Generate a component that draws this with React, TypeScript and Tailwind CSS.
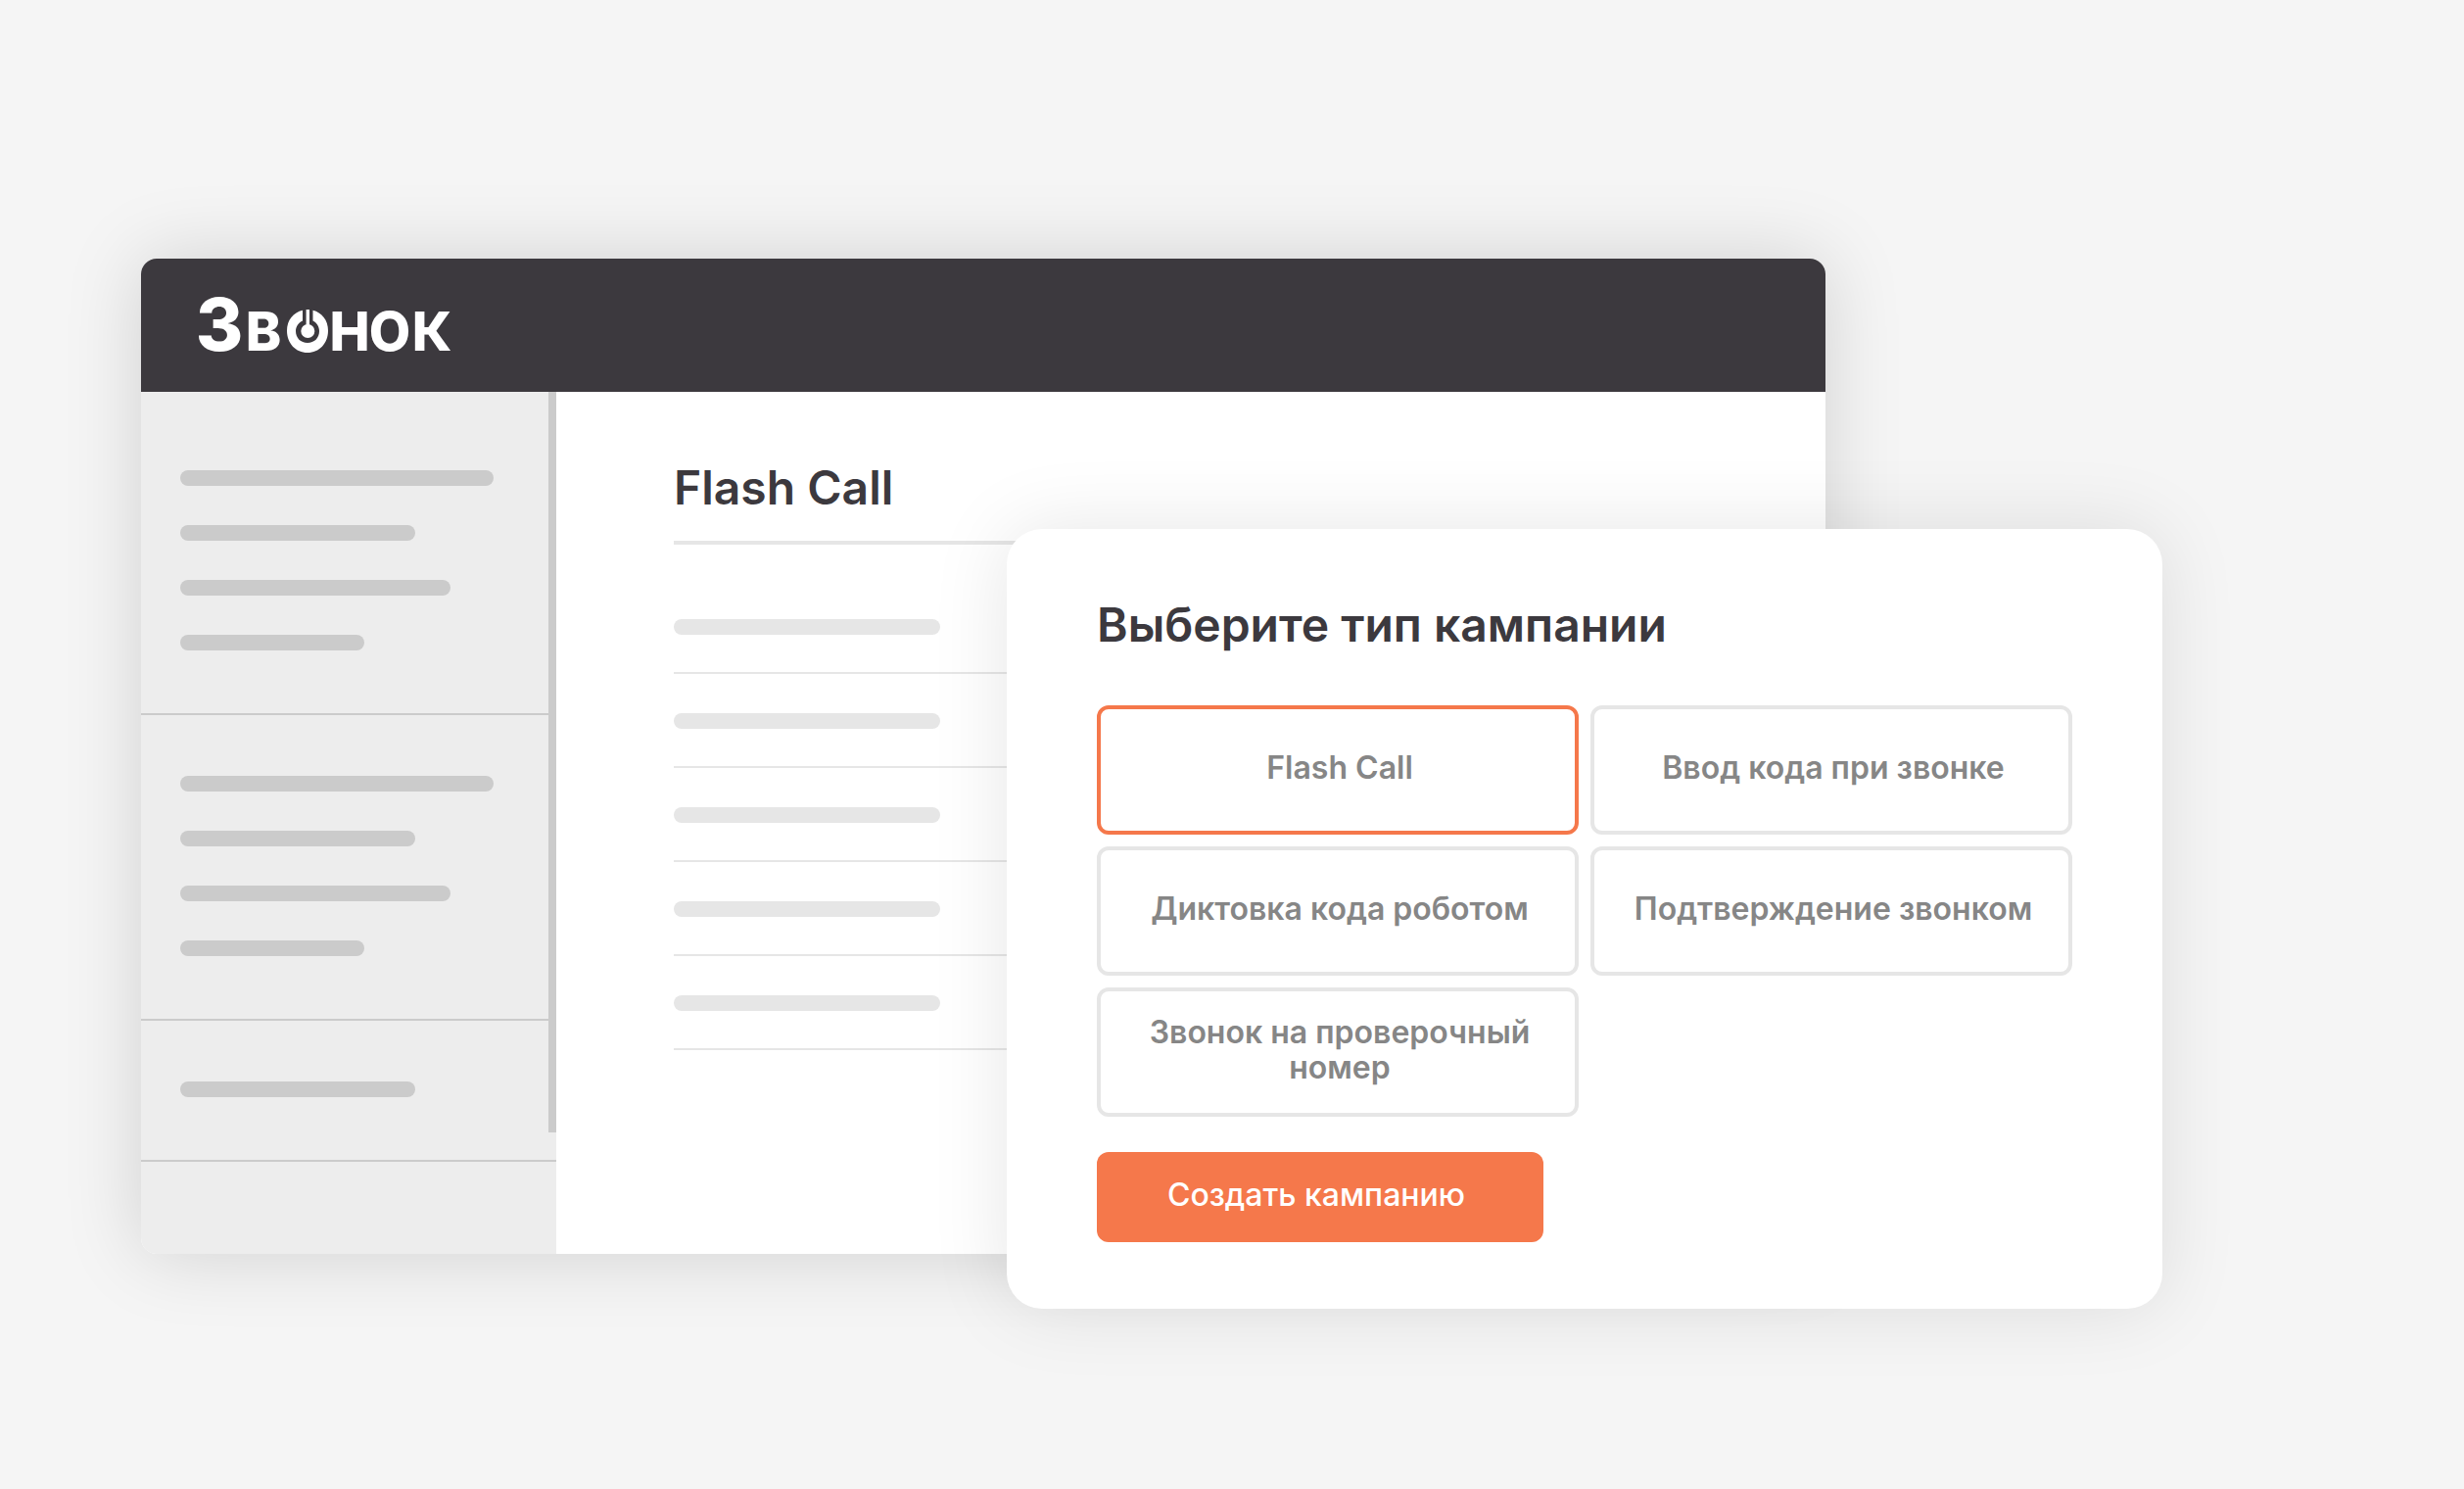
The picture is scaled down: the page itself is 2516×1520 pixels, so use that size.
import { useState } from "react";

const sidebarGroups: string[][] = [
  ["w-80", "w-60", "w-[276px]", "w-[188px]"],
  ["w-80", "w-60", "w-[276px]", "w-[188px]"],
  ["w-60"],
];

const rows = [1, 2, 3, 4, 5];

const campaignTypes = [
  "Flash Call",
  "Ввод кода при звонке",
  "Диктовка кода роботом",
  "Подтверждение звонком",
  "Звонок на проверочный номер",
];

function Logo() {
  return (
    <svg
      role="img"
      aria-label="Звонок"
      width="256"
      height="56"
      viewBox="0 0 256 56"
      fill="#ffffff"
      className="shrink-0 overflow-visible font-['Inter',sans-serif] font-extrabold"
    >
      <g textAnchor="middle">
        <text x="20" y="54" fontSize="74">З</text>
        <text x="65" y="54" fontSize="55">В</text>
        <text x="153" y="54" fontSize="55">Н</text>
        <text x="194" y="54" fontSize="55">О</text>
        <text x="237" y="54" fontSize="55">К</text>
      </g>
      {/* ring with a plugged-in stem */}
      <path
        fillRule="evenodd"
        d="M105 12.8C95.500 15 89 23 89 33.500C89 46.500 98 56 110 56C122 56 131 46.500 131 33.500C131 23 124.500 15 115.500 12.800V23.500C119.500 25.500 122 29.300 122 34C122 41 117 46 110 46C103 46 98 41 98 34C98 29.300 100.700 25.500 105 23.500Z"
      />
      <rect x="108.600" y="12" width="3.400" height="18" />
      <circle cx="110.300" cy="34" r="7" />
    </svg>
  );
}

function Sidebar() {
  return (
    <aside className="relative w-[424px] shrink-0 bg-[#ededed] pt-[18px] pb-[94px]">
      {sidebarGroups.map((bars, i) => (
        <ul key={i} className="flex flex-col gap-10 border-b-2 border-[#cbcbcb] px-10 pt-[62px] pb-16">
          {bars.map((width, j) => (
            <li key={j} className={`h-4 rounded-full bg-[#cbcbcb] ${width}`} />
          ))}
        </ul>
      ))}
      <div className="absolute top-0 right-0 h-[756px] w-2 bg-[#cbcbcb]" />
    </aside>
  );
}

function CampaignDialog() {
  const [selected, setSelected] = useState(campaignTypes[0]);
  return (
    <form
      role="dialog"
      aria-labelledby="dialog-title"
      onSubmit={(e) => e.preventDefault()}
      className="absolute top-[276px] right-0 w-[1180px] rounded-[36px] bg-white px-[92px] pt-[70px] pb-[68px] shadow-[0_0_80px_rgba(0,0,0,0.1)]"
    >
      <h2 id="dialog-title" className="text-5xl leading-[56px] font-semibold">
        Выберите тип кампании
      </h2>
      <div role="radiogroup" aria-labelledby="dialog-title" className="mt-[54px] grid grid-cols-2 gap-3">
        {campaignTypes.map((type) => (
          <label
            key={type}
            className="relative flex min-h-[132px] cursor-pointer items-center justify-center rounded-xl border-4 border-[#e6e6e6] pb-1 pl-1 text-center text-[32px] leading-9 font-semibold text-[#868686] has-checked:border-[#f5784b]"
          >
            <input
              type="radio"
              name="campaign-type"
              value={type}
              checked={selected === type}
              onChange={() => setSelected(type)}
              className="sr-only"
            />
            {type}
          </label>
        ))}
      </div>
      <button
        type="submit"
        className="mt-9 block h-[92px] w-[456px] cursor-pointer rounded-xl bg-[#f5784b] pr-2 pb-1 text-[32px] leading-9 font-medium text-white"
      >
        Создать кампанию
      </button>
    </form>
  );
}

export default function App() {
  return (
    <div className="min-h-screen bg-[#f5f5f5] pt-[264px] pr-[308px] pb-[184px] pl-36 font-['Inter',sans-serif] text-[#3c393e]">
      <div className="relative">
        <div className="mr-[344px] overflow-hidden rounded-2xl bg-white shadow-[0_0_80px_rgba(0,0,0,0.15)]">
          <header className="flex h-[136px] items-center bg-[#3c393e] px-[60px]">
            <Logo />
          </header>
          <div className="flex">
            <Sidebar />
            <main className="grow px-[120px] pt-[70px] pb-52">
              <h1 className="border-b-4 border-[#e6e6e6] pb-[26px] text-5xl leading-[56px] font-semibold">
                Flash Call
              </h1>
              <ul className="pt-9">
                {rows.map((row) => (
                  <li key={row} className="border-b-2 border-[#e6e6e6] pt-10 pb-[38px]">
                    <div className="h-4 w-[272px] rounded-full bg-[#e6e6e6]" />
                  </li>
                ))}
              </ul>
            </main>
          </div>
        </div>
        <CampaignDialog />
      </div>
    </div>
  );
}
